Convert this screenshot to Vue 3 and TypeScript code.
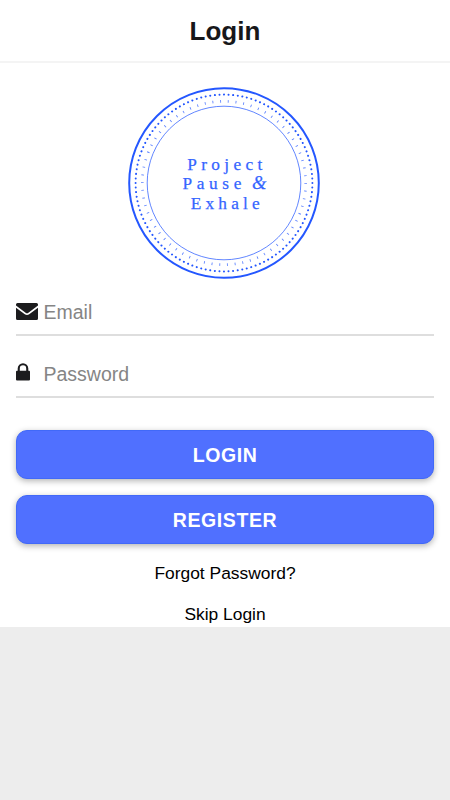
<template>
  <div class="login-page">
    <header class="page-header">
      <h1 class="page-title">Login</h1>
    </header>

    <main class="page-content">
      <!-- Logo -->
      <svg class="logo" viewBox="0 0 192 192" role="img" aria-label="Project Pause &amp; Exhale">
        <circle class="ring-outer" cx="96" cy="96" r="94.8" />
        <circle class="ring-dots" cx="96" cy="96" r="88.4" pathLength="120" />
        <circle class="ring-ticks" cx="96" cy="96" r="81.7" pathLength="66" />
        <circle class="ring-inner" cx="96" cy="96" r="76.8" />
        <text
            v-for="line in logoLines"
            :key="line.text"
            :x="line.x"
            :y="line.y"
            :textLength="line.width"
            class="logo-text"
        >{{ line.text }}</text>
        <text class="logo-text logo-amp" x="124" y="101.9">&amp;</text>
      </svg>

      <form class="login-form" @submit.prevent>
        <label class="field">
          <svg class="field-icon" viewBox="0 0 22 22">
            <path d="M1.5 2H20.5Q22 2 22 3.5V4.6L12.4 11.800Q11 12.800 9.600 11.800L0 4.600V3.500Q0 2 1.500 2zM0 6.700L8.800 13.300Q11 14.700 13.200 13.300L22 6.700V17.500Q22 19 20.500 19H1.500Q0 19 0 17.500z" />
          </svg>
          <input v-model="email" class="field-input" type="email" placeholder="Email" />
        </label>

        <label class="field">
          <svg class="field-icon" viewBox="0 0 22 22">
            <path d="M1 7.800H1.700V5.500a5.300 5.300 0 0 1 10.600 0v2.300h.7q1 0 1 1V16.500q0 1-1 1H1q-1 0-1-1V8.800q0-1 1-1zM3.800 7.800h6.400V5.500a3.200 3.200 0 0 0-6.400 0z" />
          </svg>
          <input v-model="password" class="field-input" type="password" placeholder="Password" />
        </label>

        <button class="action-button action-button--first" type="submit">LOGIN</button>
        <button class="action-button" type="button">REGISTER</button>
      </form>

      <a class="text-link">Forgot Password?</a>
      <a class="text-link text-link--last">Skip Login</a>
    </main>
  </div>
</template>

<script lang="ts" setup>
import {ref} from 'vue'

interface LogoLine {
  text: string
  x: number
  y: number
  width: number
}

const logoLines: LogoLine[] = [
  {text: 'Project', x: 59.2, y: 82.6, width: 75},
  {text: 'Pause', x: 54.4, y: 102, width: 59},
  {text: 'Exhale', x: 62.7, y: 121.5, width: 69},
]

const email = ref('')
const password = ref('')
</script>

<style>
body {
  background: #ededed;
}
</style>

<style scoped>
.login-page {
  height: 627px;
  background: #fff;
  color: #111;
  font-family: "Liberation Sans", Arial, sans-serif;
}

.page-header {
  box-sizing: border-box;
  height: 63px;
  display: flex;
  align-items: center;
  justify-content: center;
  border-bottom: 2px solid #f4f4f4;
}

.page-title {
  margin: 0;
  font-size: 26px;
  line-height: 30px;
  color: #17171a;
}

.page-content {
  display: flex;
  flex-direction: column;
  align-items: center;
  padding: 24px 16px 0;
}

.logo {
  display: block;
  width: 192px;
  height: 192px;
  margin-right: 1.4px;
  fill: none;
  stroke: #2457ff;
}

.ring-outer {
  stroke-width: 2;
}

.ring-dots {
  stroke-width: 2;
  stroke-linecap: round;
  stroke-dasharray: 0.01 0.99;
}

.ring-ticks {
  stroke-width: 2.6;
  stroke-dasharray: 0.11 0.89;
  stroke-opacity: 0.75;
}

.ring-inner {
  stroke-width: 0.9;
  stroke-opacity: 0.8;
}

.logo-text {
  fill: #3565ff;
  stroke: #3565ff;
  stroke-width: 0.25;
  font-family: "Liberation Serif", "Times New Roman", serif;
  font-size: 17.3px;
}

.logo-amp {
  font-size: 18.5px;
  font-style: italic;
}

.login-form {
  width: 100%;
}

.field {
  box-sizing: border-box;
  height: 62px;
  display: flex;
  align-items: center;
  padding-top: 15px;
  border-bottom: 2px solid #dedede;
}

.field:first-child {
  height: 57px;
  padding-top: 10px;
}

.field-icon {
  width: 22px;
  height: 22px;
  margin-right: 5.5px;
  fill: #1c1c1e;
}

.field-input {
  flex: 1;
  min-width: 0;
  padding: 0;
  border: none;
  outline: none;
  background: transparent;
  font-family: inherit;
  font-size: 19.5px;
  line-height: 24px;
}

.field-input::placeholder {
  color: #858585;
}

.action-button {
  display: block;
  width: 100%;
  height: 49px;
  margin-top: 16.3px;
  padding: 2px 0 0;
  border: 1px solid #4169f8;
  border-radius: 11px;
  background: #5070ff;
  box-shadow: 0 2px 6px rgba(0, 0, 0, 0.3);
  color: #fff;
  font-family: inherit;
  font-size: 19.5px;
  font-weight: bold;
  letter-spacing: 0.6px;
}

.action-button--first {
  margin-top: 32px;
}

.text-link {
  margin-top: 17.7px;
  font-size: 17.4px;
  line-height: 22px;
  color: #000;
}

.text-link--last {
  margin-top: 19px;
}
</style>
